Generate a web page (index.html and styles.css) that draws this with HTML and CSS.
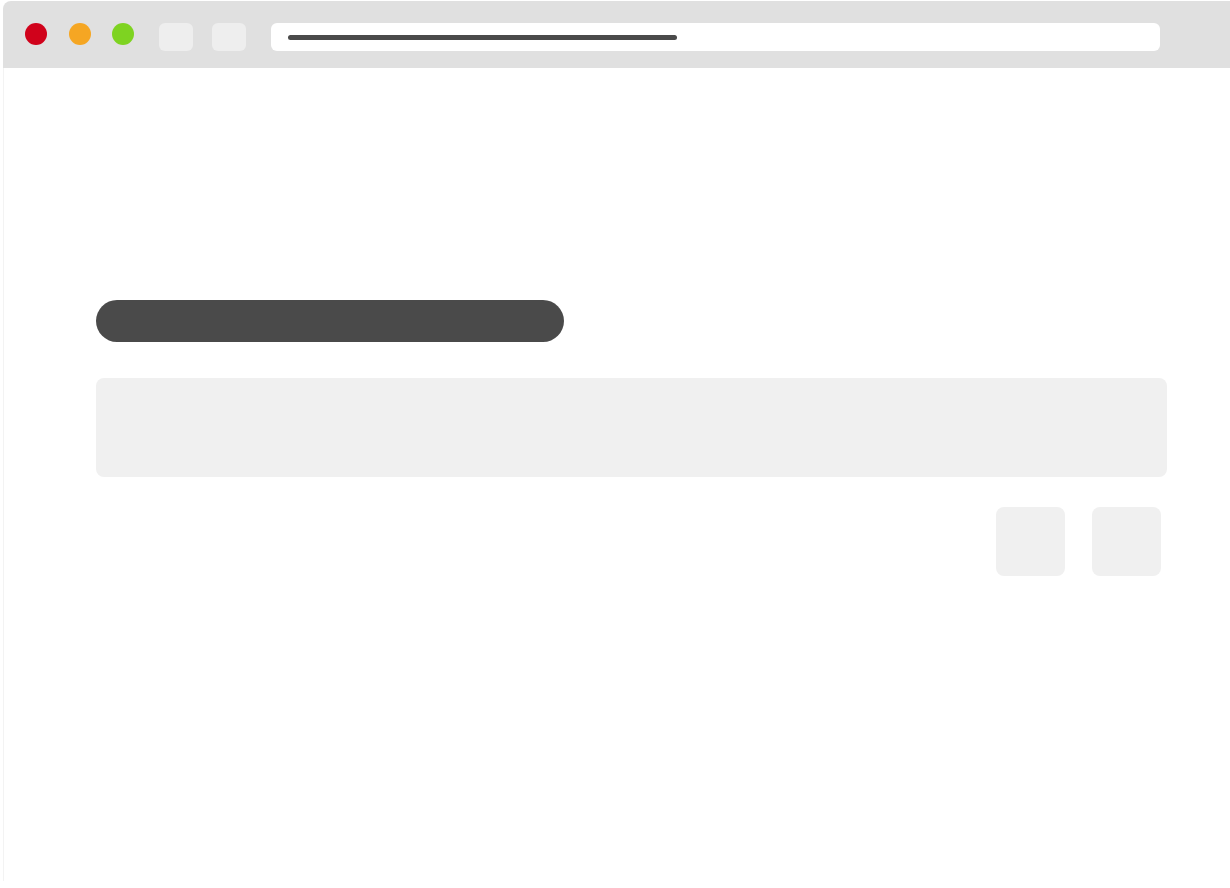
FILE: index.html
```html
<!DOCTYPE html>
<html lang="en">
<head>
    <meta charset="UTF-8">
    <meta name="viewport" content="width=device-width, initial-scale=1.0">
    <title>Wireframe</title>
    <link rel="stylesheet" href="styles.css">
</head>
<body>
    <div class="browser">
        <div class="browser-bar">
            <span class="dot dot-red"></span>
            <span class="dot dot-orange"></span>
            <span class="dot dot-green"></span>
            <span class="nav-btn nav-back"></span>
            <span class="nav-btn nav-forward"></span>
            <div class="address">
                <span class="address-line"></span>
            </div>
        </div>
        <div class="browser-page">
            <div class="page-inner">
                <div class="title-pill"></div>
                <div class="input-block"></div>
                <div class="actions">
                    <span class="square"></span>
                    <span class="square"></span>
                </div>
            </div>
        </div>
    </div>
</body>
</html>
```

FILE: styles.css
```css
:root {
    --bar: #e0e0e0;
    --light: #f0f0f0;
    --dark: #4a4a4a;
    --white: #FFFFFF;
}

* {
    margin: 0;
    padding: 0;
    box-sizing: border-box;
}

body {
    background: var(--white);
    overflow: hidden;
    font-family: 'Liberation Sans', Arial, sans-serif;
}

.browser {
    margin: 1px 0 0 3px;
    width: 1240px;
    height: 880px;
    border-radius: 8px 8px 0 0;
    overflow: hidden;
    display: flex;
    flex-direction: column;
}

.browser-bar {
    height: 67px;
    flex-shrink: 0;
    background: var(--bar);
    display: flex;
    align-items: flex-start;
    padding: 22px 0 0 22px;
}

.dot {
    width: 22px;
    height: 22px;
    border-radius: 50%;
    margin-right: 21.5px;
}

.dot-red { background: #d0021b; }
.dot-orange { background: #f5a623; }
.dot-green { background: #7ed321; margin-right: 25px; }

.nav-btn {
    width: 34px;
    height: 28px;
    border-radius: 6px;
    background: #eeeeee;
}

.nav-back { margin-right: 19px; }
.nav-forward { margin-right: 25px; }

.address {
    width: 889px;
    height: 28px;
    background: var(--white);
    border-radius: 6px;
    display: flex;
    align-items: center;
    padding-left: 17px;
}

.address-line {
    width: 389px;
    height: 5px;
    border-radius: 3px;
    background: var(--dark);
}

.browser-page {
    flex: 1;
    background: var(--white);
    border-left: 1px solid #f3f3f3;
    padding: 232px 0 0 92px;
}

.page-inner {
    width: 1071px;
}

.title-pill {
    width: 468px;
    height: 42px;
    border-radius: 21px;
    background: var(--dark);
}

.input-block {
    margin-top: 36px;
    height: 99px;
    border-radius: 8px;
    background: var(--light);
}

.actions {
    margin-top: 30px;
    display: flex;
    justify-content: flex-end;
    gap: 27px;
    padding-right: 6px;
}

.square {
    width: 69px;
    height: 69px;
    border-radius: 8px;
    background: var(--light);
}
```
